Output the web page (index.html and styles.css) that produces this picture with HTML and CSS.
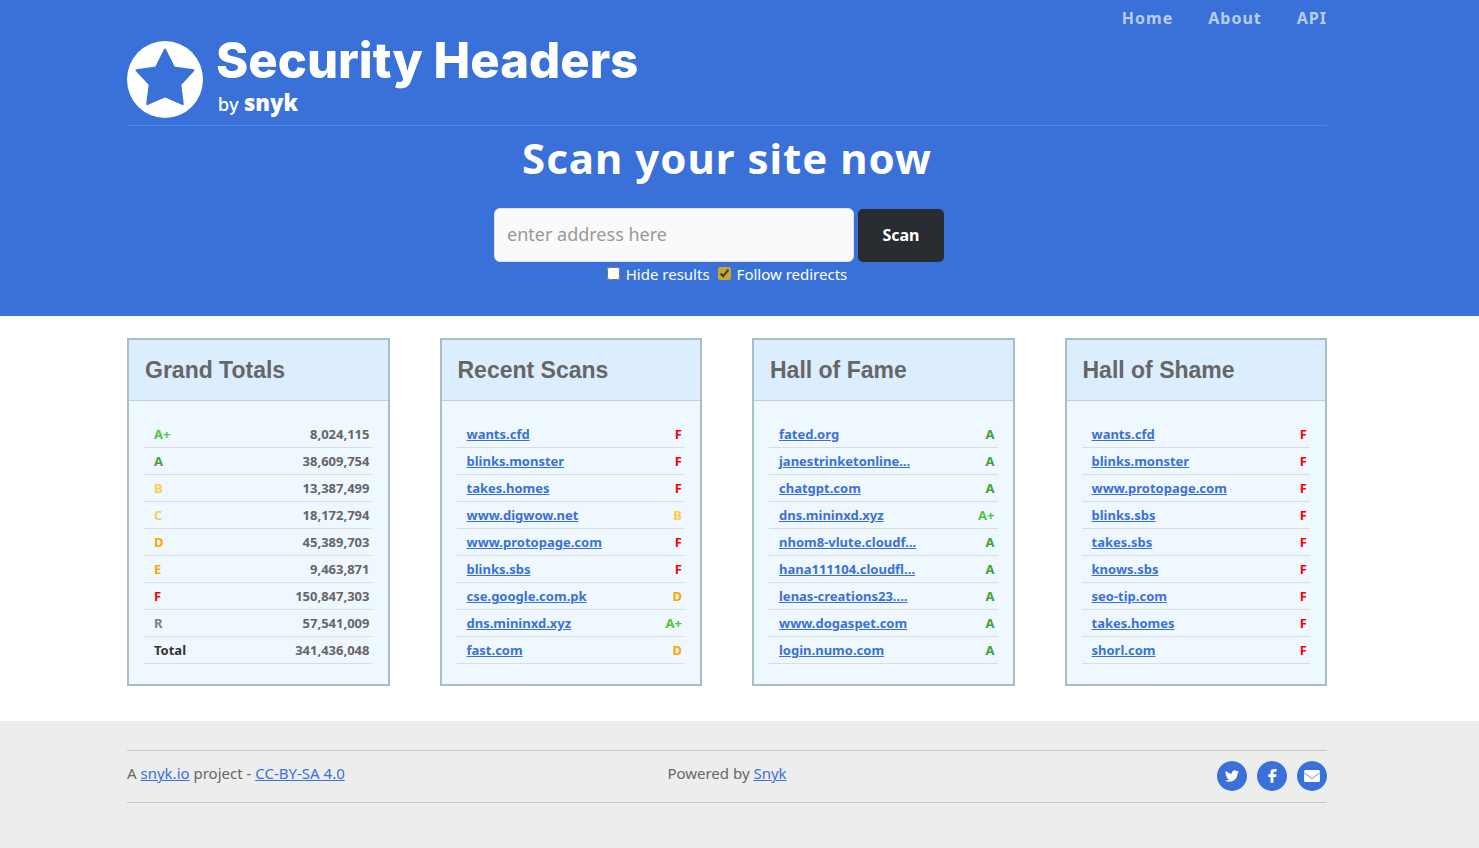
FILE: index.html
```html
<!DOCTYPE html>
<html lang="en">
<head>
<meta charset="utf-8">
<title>Security Headers</title>
<link rel="stylesheet" href="styles.css">
</head>
<body>
<header class="hero">
  <div class="container">
    <div class="masthead">
      <a class="logo" href="#" aria-label="Security Headers by Snyk">
        <svg class="logo-mark" viewBox="0 0 76 77" aria-hidden="true">
          <ellipse cx="38" cy="38.500" rx="38" ry="38.500" fill="#fff"/>
          <path d="M38 8.500 47 26.400 66.500 29.200 53.300 43.500 55.800 63.200 38 55.300 20.200 63.200 22.700 43.500 9.500 29.200 29 26.400Z" fill="#3a71d8" stroke="#3a71d8" stroke-width="2" stroke-linejoin="round"/>
        </svg>
        <span class="logo-text">
          <span class="logo-name">Security Headers</span>
          <span class="logo-by">by <b class="logo-snyk">snyk</b></span>
        </span>
      </a>
      <nav class="nav">
        <a href="#">Home</a>
        <a href="#">About</a>
        <a href="#">API</a>
      </nav>
    </div>
    <h1 class="title">Scan your site now</h1>
    <form class="scan">
      <div class="scan-row">
        <input class="address" type="text" placeholder="enter address here" aria-label="Address">
        <button class="scan-button" type="submit">Scan</button>
      </div>
      <div class="options">
        <label class="option"><input type="checkbox">Hide results</label>
        <label class="option"><input type="checkbox" checked>Follow redirects</label>
      </div>
    </form>
  </div>
</header>
<main class="container cards">
  <section class="card">
    <h2 class="card-title">Grand Totals</h2>
    <table class="list">
      <tr><td class="ap">A+</td><td>8,024,115</td></tr>
      <tr><td class="a">A</td><td>38,609,754</td></tr>
      <tr><td class="b">B</td><td>13,387,499</td></tr>
      <tr><td class="b">C</td><td>18,172,794</td></tr>
      <tr><td class="d">D</td><td>45,389,703</td></tr>
      <tr><td class="d">E</td><td>9,463,871</td></tr>
      <tr><td class="f">F</td><td>150,847,303</td></tr>
      <tr><td class="r">R</td><td>57,541,009</td></tr>
      <tr><td class="total">Total</td><td>341,436,048</td></tr>
    </table>
  </section>
  <section class="card">
    <h2 class="card-title">Recent Scans</h2>
    <table class="list">
      <tr><td><a href="#">wants.cfd</a></td><td class="f">F</td></tr>
      <tr><td><a href="#">blinks.monster</a></td><td class="f">F</td></tr>
      <tr><td><a href="#">takes.homes</a></td><td class="f">F</td></tr>
      <tr><td><a href="#">www.digwow.net</a></td><td class="b">B</td></tr>
      <tr><td><a href="#">www.protopage.com</a></td><td class="f">F</td></tr>
      <tr><td><a href="#">blinks.sbs</a></td><td class="f">F</td></tr>
      <tr><td><a href="#">cse.google.com.pk</a></td><td class="d">D</td></tr>
      <tr><td><a href="#">dns.mininxd.xyz</a></td><td class="ap">A+</td></tr>
      <tr><td><a href="#">fast.com</a></td><td class="d">D</td></tr>
    </table>
  </section>
  <section class="card">
    <h2 class="card-title">Hall of Fame</h2>
    <table class="list">
      <tr><td><a href="#">fated.org</a></td><td class="a">A</td></tr>
      <tr><td><a href="#">janestrinketonline...</a></td><td class="a">A</td></tr>
      <tr><td><a href="#">chatgpt.com</a></td><td class="a">A</td></tr>
      <tr><td><a href="#">dns.mininxd.xyz</a></td><td class="ap">A+</td></tr>
      <tr><td><a href="#">nhom8-vlute.cloudf...</a></td><td class="a">A</td></tr>
      <tr><td><a href="#">hana111104.cloudfl...</a></td><td class="a">A</td></tr>
      <tr><td><a href="#">lenas-creations23....</a></td><td class="a">A</td></tr>
      <tr><td><a href="#">www.dogaspet.com</a></td><td class="a">A</td></tr>
      <tr><td><a href="#">login.numo.com</a></td><td class="a">A</td></tr>
    </table>
  </section>
  <section class="card">
    <h2 class="card-title">Hall of Shame</h2>
    <table class="list">
      <tr><td><a href="#">wants.cfd</a></td><td class="f">F</td></tr>
      <tr><td><a href="#">blinks.monster</a></td><td class="f">F</td></tr>
      <tr><td><a href="#">www.protopage.com</a></td><td class="f">F</td></tr>
      <tr><td><a href="#">blinks.sbs</a></td><td class="f">F</td></tr>
      <tr><td><a href="#">takes.sbs</a></td><td class="f">F</td></tr>
      <tr><td><a href="#">knows.sbs</a></td><td class="f">F</td></tr>
      <tr><td><a href="#">seo-tip.com</a></td><td class="f">F</td></tr>
      <tr><td><a href="#">takes.homes</a></td><td class="f">F</td></tr>
      <tr><td><a href="#">shorl.com</a></td><td class="f">F</td></tr>
    </table>
  </section>
</main>
<footer class="footer">
  <div class="container">
    <div class="footer-row">
      <p>A <a href="#">snyk.io</a> project - <a href="#">CC-BY-SA 4.0</a></p>
      <p>Powered by <a href="#">Snyk</a></p>
      <div class="social">
        <a href="#" aria-label="Twitter"><svg viewBox="0 0 24 24"><path fill="#fff" d="M23.950 4.570a10 10 0 0 1-2.820.780 4.960 4.960 0 0 0 2.160-2.720c-.950.550-2 .960-3.130 1.180a4.920 4.920 0 0 0-8.380 4.480C7.690 8.100 4.070 6.130 1.640 3.160a4.920 4.920 0 0 0 1.520 6.570 4.900 4.900 0 0 1-2.230-.610v.060a4.920 4.920 0 0 0 3.950 4.830 5 5 0 0 1-2.210.080 4.940 4.940 0 0 0 4.600 3.420A9.870 9.870 0 0 1 0 19.540a13.990 13.990 0 0 0 7.550 2.210c9.050 0 14-7.500 14-13.980 0-.210 0-.420-.020-.630a9.940 9.940 0 0 0 2.420-2.570Z"/></svg></a>
        <a href="#" aria-label="Facebook"><svg viewBox="0 0 24 24"><path fill="#fff" d="M9.500 23.500V13.800H5.500V9h4V6C9.500 2 11.500 0 15.800 0h4v4.600h-2.800c-1.900 0-2.500.700-2.500 2.200V9h5.300l-.700 4.800h-4.600v9.700Z"/></svg></a>
        <a class="mail" href="#" aria-label="Email"><svg viewBox="0 0 16 16"><path fill="#fff" d="M1.500 2h13c.8 0 1.500.7 1.500 1.500v.7L8 10.200 0 4.200v-.7C0 2.700.7 2 1.500 2ZM0 5.100l8 6 8-6v7.400c0 .8-.7 1.500-1.500 1.500h-13C.7 14 0 13.300 0 12.500Z"/></svg></a>
      </div>
    </div>
  </div>
</footer>
</body>
</html>
```
FILE: styles.css
```css
* { box-sizing: border-box; }
body {
  margin: 0;
  min-height: 100vh;
  display: flex;
  flex-direction: column;
  font: 15px/20px "Noto Sans", sans-serif;
  color: #666;
  background: #fff;
}
a { color: #3a71d8; }
p { margin: 0; }
.hero, .cards, .footer { padding-right: 25px; }
.container { width: 100%; max-width: 1200px; margin: 0 auto; }
.hero { background: #3a71d8; color: #fff; padding-bottom: 30px; }
.masthead {
  display: flex;
  justify-content: space-between;
  align-items: flex-start;
  height: 126px;
  border-bottom: 1px solid #5485e0;
}
.logo {
  display: flex;
  gap: 13px;
  padding-top: 33px;
  color: #fff;
  text-decoration: none;
}
.logo-mark { width: 76px; height: 77px; margin-top: 8px; }
.logo-text { display: flex; flex-direction: column; }
.logo-name { font: 800 49px/55px Inter, sans-serif; }
.logo-by { font: 500 18px/28px Inter, sans-serif; padding-left: 2px; }
.logo-snyk { font: 800 22px/28px "Open Sans", sans-serif; }
.nav { display: flex; gap: 35px; padding-top: 8px; }
.nav a {
  font-size: 16px;
  font-weight: 700;
  letter-spacing: 1px;
  color: #b9cdf2;
  text-decoration: none;
}
.title {
  margin: 4px 0 23px;
  font-size: 42px;
  line-height: 55px;
  font-weight: 700;
  letter-spacing: 1px;
  text-align: center;
}
.scan { text-align: center; }
.scan-row {
  display: flex;
  justify-content: center;
  align-items: flex-end;
  gap: 4px;
  padding-right: 16px;
}
.address {
  width: 360px;
  height: 54px;
  padding: 0 12px 2px;
  border: 1px solid #dde3f0;
  border-radius: 6px;
  background: #fafafa;
  font: 18px "Noto Sans", sans-serif;
  color: #444;
}
.address::placeholder { color: #999; }
.scan-button {
  width: 86px;
  height: 53px;
  padding: 0 0 2px;
  border: 0;
  border-radius: 5px;
  background: #292c31;
  color: #fff;
  font: 700 16px "Noto Sans", sans-serif;
}
.options { display: flex; justify-content: center; gap: 8px; padding: 2px 0; }
.option { display: flex; align-items: flex-start; gap: 6px; line-height: 20px; }
.option input { margin: 3px 0 0; width: 13px; height: 13px; accent-color: #c9a827; }
.cards {
  display: grid;
  grid-template-columns: repeat(4, 1fr);
  gap: 50px;
  max-width: 1225px;
  padding-top: 22px;
  padding-bottom: 35px;
}
.card { border: 2px solid #a7c0c3; background: #eff7ff; padding-bottom: 20px; }
.card-title {
  margin: 0 0 20px;
  padding: 15px 16px;
  border-bottom: 1px solid #c3cfd6;
  background: #dcedfe;
  font: 700 23px/30px "Liberation Sans", Arial, sans-serif;
}
.list {
  width: calc(100% - 30px);
  margin: 0 15px;
  border-collapse: collapse;
  font-size: 13px;
  line-height: 18px;
  font-weight: 700;
}
.list td { padding: 4px 3px 4px 10px; border-bottom: 1px solid #ddd; }
.list td:last-child { text-align: right; }
.ap { color: #4ec83d; }
.a { color: #3fa535; }
.b { color: #ffcc4d; }
.d { color: #ffa500; }
.f { color: #f00; }
.r { color: #808080; }
.total { color: #333; }
.footer { flex: 1; background: #ededed; padding-top: 29px; padding-bottom: 45px; }
.footer-row {
  display: grid;
  grid-template-columns: 1fr auto 1fr;
  border: 1px solid #c5c7ce;
  border-width: 1px 0;
  padding: 10px 0 11px;
}
.footer-row p { line-height: 24px; }
.social { display: flex; justify-content: flex-end; gap: 10px; }
.social a {
  display: flex;
  align-items: center;
  justify-content: center;
  width: 30px;
  height: 30px;
  border-radius: 50%;
  background: #3a71d8;
}
.social svg { width: 14px; height: 14px; }
.social .mail svg { width: 16px; height: 16px; }
```
